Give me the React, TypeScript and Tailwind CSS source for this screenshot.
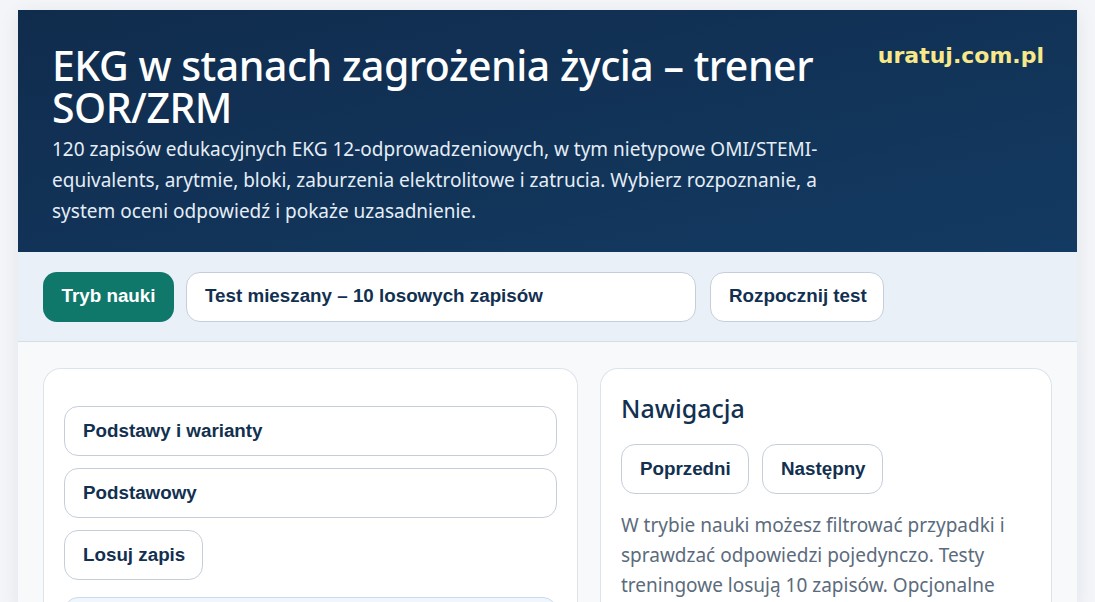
const btn =
  "h-[50px] whitespace-nowrap rounded-[14px] border border-[#c5cfdb] bg-white px-[18px] text-left text-[18.8px] font-bold text-[#12304f] [font-family:'Liberation_Sans',Arial,sans-serif]";

export default function App() {
  return (
    <div className="min-h-screen bg-[#f3f5f8] px-[18px] pt-[10px] [font-family:'Noto_Sans',sans-serif]">
      <div className="overflow-hidden bg-[#f7f9fb] shadow-[0_4px_18px_rgba(15,35,60,0.08)]">
        {/* header */}
        <header className="flex h-[242px] justify-between bg-gradient-to-br from-[#102c4d] to-[#133a62] pl-[34px] pr-[33px] pt-[34px]">
          <div className="max-w-[790px]">
            <h1 className="text-[41px] font-medium leading-[42px] tracking-[-0.5px] text-white">
              EKG w stanach zagrożenia życia – trener SOR/ZRM
            </h1>
            <p className="mt-[6px] text-[19px] leading-[31px] text-[#e4edf6]">
              120 zapisów edukacyjnych EKG 12-odprowadzeniowych, w tym nietypowe OMI/STEMI-equivalents, arytmie, bloki,
              zaburzenia elektrolitowe i zatrucia. Wybierz rozpoznanie, a system oceni odpowiedź i pokaże uzasadnienie.
            </p>
          </div>
          <div className="-mt-[5px] text-[22px] font-bold text-[#f7e889] [font-family:'DejaVu_Sans',sans-serif]">
            uratuj.com.pl
          </div>
        </header>

        {/* toolbar */}
        <div className="flex h-[90px] items-center gap-[12px] border-b border-[#d5dde6] bg-[#e9f0f7] px-[25px]">
          <button className="h-[50px] w-[131px] whitespace-nowrap rounded-[14px] bg-[#10776b] text-[18.8px] font-bold text-white [font-family:'Liberation_Sans',Arial,sans-serif]">
            Tryb nauki
          </button>
          <button className={`${btn} w-[510px]`}>Test mieszany – 10 losowych zapisów</button>
          <button className={`${btn} ml-[2px] w-[174px] text-center`}>Rozpocznij test</button>
        </div>

        {/* content */}
        <div className="flex gap-[22px] px-[25px] pt-[26px]">
          <div className="h-[240px] w-[535px] rounded-t-[18px] border border-b-0 border-[#dde3ea] bg-white px-[20px] pt-[37px]">
            <div className="flex flex-col gap-[12px]">
              <button className={`${btn} w-full`}>Podstawy i warianty</button>
              <button className={`${btn} w-full`}>Podstawowy</button>
              <button className={`${btn} w-[139px]`}>Losuj zapis</button>
              <div className="mt-[5px] h-[40px] w-full rounded-[14px] border border-[#c9dcef] bg-[#f0f6fc]" />
            </div>
          </div>
          <div className="h-[240px] flex-1 rounded-t-[18px] border border-b-0 border-[#dde3ea] bg-white px-[20px] pt-[22px]">
            <h2 className="text-[25px] font-medium leading-[34px] text-[#12304f]">Nawigacja</h2>
            <div className="mt-[19px] flex gap-[13px]">
              <button className={`${btn} w-[128px] text-center`}>Poprzedni</button>
              <button className={`${btn} w-[121px] text-center`}>Następny</button>
            </div>
            <p className="mt-[16px] text-[19px] leading-[30px] text-[#5b6b7c]">
              W trybie nauki możesz filtrować przypadki i sprawdzać odpowiedzi pojedynczo. Testy treningowe losują 10
              zapisów. Opcjonalne
            </p>
          </div>
        </div>
      </div>
    </div>
  );
}
